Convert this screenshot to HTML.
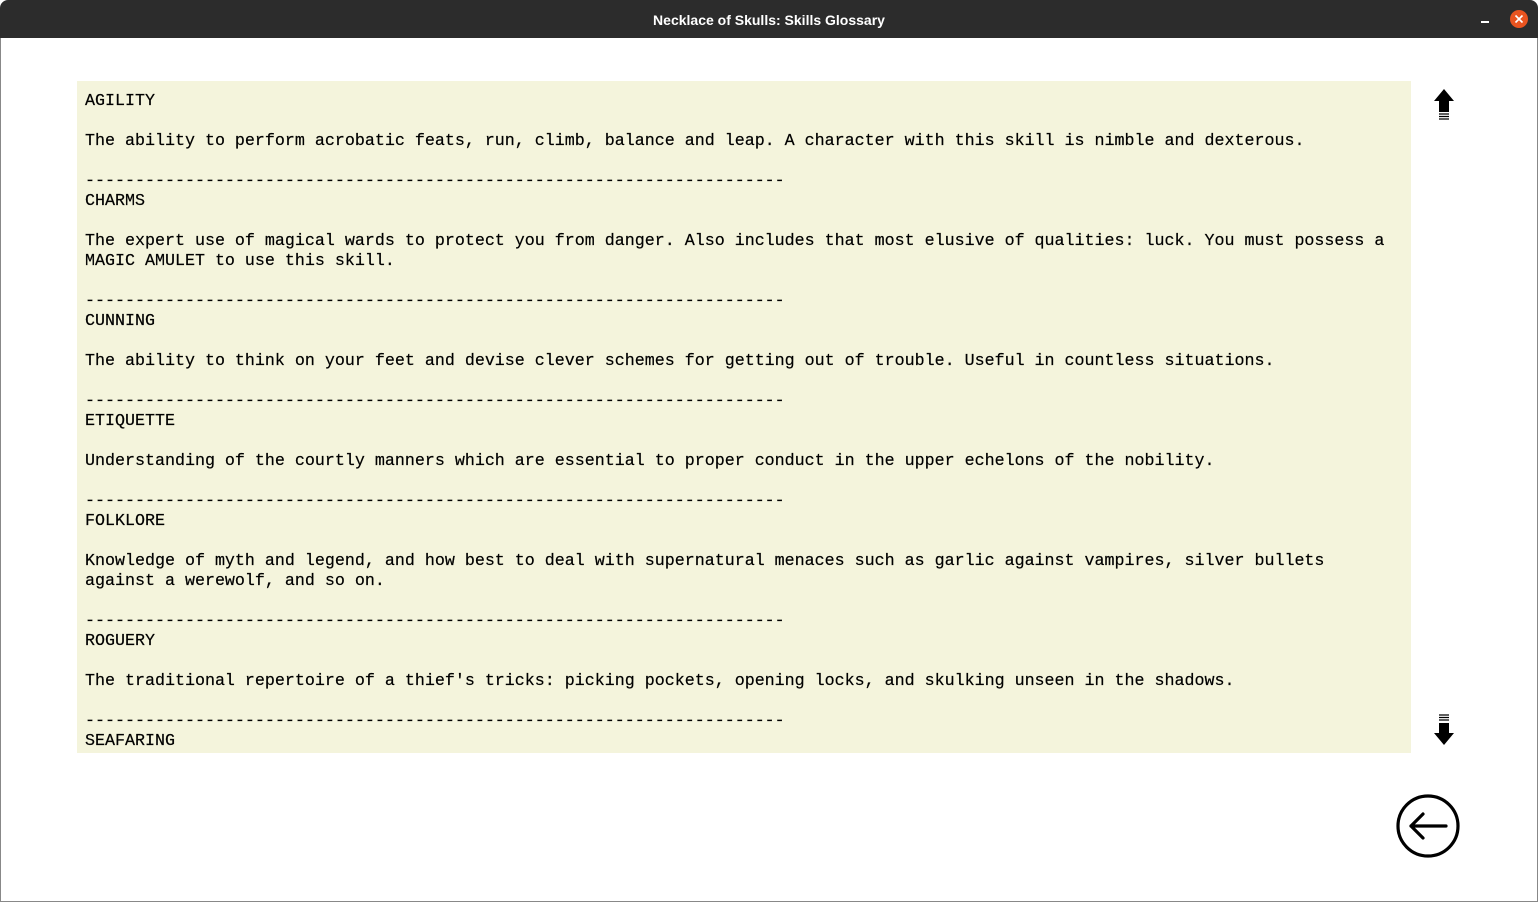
<!DOCTYPE html>
<html><head><style>
html,body{margin:0;padding:0}
body{width:1538px;height:903px;position:relative;background:#fff;overflow:hidden;font-family:"Liberation Sans",sans-serif}
.tb{position:absolute;left:0;top:0;width:1538px;height:38px;background:#2c2c2c;border-radius:8px 8px 0 0;color:#fff;font-weight:bold;font-size:14px;text-align:center;line-height:40px}
.frame{position:absolute;left:0;top:38px;width:1536px;height:863px;border:1px solid #888;border-top:none}
.panel{position:absolute;left:77px;top:81px;width:1334px;height:672px;background:#f4f4dc;overflow:hidden}
pre{margin:0;padding:11px 8px;font-family:"Liberation Mono",monospace;font-size:16.67px;line-height:20px;color:#000;white-space:pre;-webkit-text-stroke:0.2px #000}
.x{position:absolute;left:1510px;top:10px;width:18px;height:18px;border-radius:50%;background:#e95420}
.min{position:absolute;left:1481px;top:21px;width:8px;height:1.5px;background:#fff}
</style></head><body>
<div class="tb">Necklace of Skulls: Skills Glossary</div>
<div class="min"></div>
<div class="x"><svg width="18" height="18"><path d="M5.5 5.5L12.5 12.5M12.5 5.5L5.5 12.5" stroke="#fff" stroke-width="1.6"/></svg></div>
<div class="frame"></div>
<div class="panel"><pre>AGILITY

The ability to perform acrobatic feats, run, climb, balance and leap. A character with this skill is nimble and dexterous.

----------------------------------------------------------------------
CHARMS

The expert use of magical wards to protect you from danger. Also includes that most elusive of qualities: luck. You must possess a
MAGIC AMULET to use this skill.

----------------------------------------------------------------------
CUNNING

The ability to think on your feet and devise clever schemes for getting out of trouble. Useful in countless situations.

----------------------------------------------------------------------
ETIQUETTE

Understanding of the courtly manners which are essential to proper conduct in the upper echelons of the nobility.

----------------------------------------------------------------------
FOLKLORE

Knowledge of myth and legend, and how best to deal with supernatural menaces such as garlic against vampires, silver bullets
against a werewolf, and so on.

----------------------------------------------------------------------
ROGUERY

The traditional repertoire of a thief's tricks: picking pockets, opening locks, and skulking unseen in the shadows.

----------------------------------------------------------------------
SEAFARING
</pre></div>
<svg style="position:absolute;left:0;top:0" width="1538" height="903">
<path d="M1444 89L1454 101L1449 101L1449 112L1439 112L1439 101L1434 101Z" fill="#000"/>
<path d="M1439 114H1449M1439 116.5H1449M1439 119H1449" stroke="#000" stroke-width="1.2"/>
<path d="M1444 745L1454 733L1449 733L1449 723L1439 723L1439 733L1434 733Z" fill="#000"/>
<path d="M1439 715H1449M1439 717.5H1449M1439 720H1449" stroke="#000" stroke-width="1.2"/>
<circle cx="1428" cy="826" r="30" fill="none" stroke="#000" stroke-width="3.2"/>
<path d="M1446 826H1411M1423 814L1411 826L1423 838" fill="none" stroke="#000" stroke-width="3.2" stroke-linecap="round" stroke-linejoin="round"/>
</svg>
</body></html>
